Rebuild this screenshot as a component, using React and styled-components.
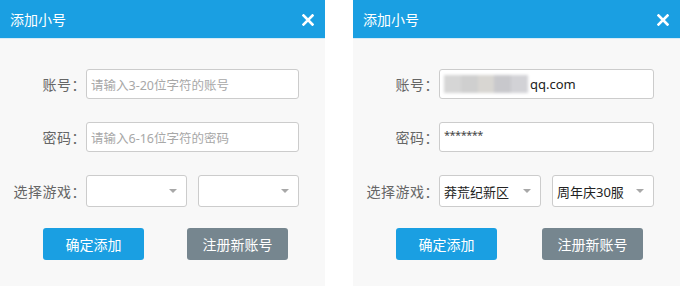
import React from 'react'
import styled, { createGlobalStyle } from 'styled-components'

const GlobalStyle = createGlobalStyle`
    body {
        margin: 0;
        background: #ffffff;
        font-family: "Noto Sans", "Noto Sans CJK SC", sans-serif;
    }
`

const dialogs = [
    { account: '', password: '', game: '', server: '' },
    { account: 'qq.com', password: '*******', game: '莽荒纪新区', server: '周年庆30服' }
]

const CloseIcon = () => (
    <svg width="12" height="12" viewBox="0 0 12 12">
        <path d="M1.5 1.5 L10.5 10.5 M10.5 1.5 L1.5 10.5" stroke="#ffffff" strokeWidth="2.6" strokeLinecap="square" />
    </svg>
)

const Dialog = ({ data, wide }) => (
    <Panel $wide={wide}>
        <Header>
            <Title>添加小号</Title>
            <Close><CloseIcon /></Close>
        </Header>
        <Body>
            <Row>
                <Label>账号：</Label>
                <Field>
                    {data.account ? (
                        <>
                            <Blur />
                            <Value>{data.account}</Value>
                        </>
                    ) : (
                        <Placeholder>请输入3-20位字符的账号</Placeholder>
                    )}
                </Field>
            </Row>
            <Row>
                <Label>密码：</Label>
                <Field>
                    {data.password ? (
                        <Stars>{data.password}</Stars>
                    ) : (
                        <Placeholder>请输入6-16位字符的密码</Placeholder>
                    )}
                </Field>
            </Row>
            <Row>
                <Label>选择游戏：</Label>
                <Selects>
                    <Select>
                        <Value>{data.game}</Value>
                        <Arrow />
                    </Select>
                    <Select>
                        <Value>{data.server}</Value>
                        <Arrow />
                    </Select>
                </Selects>
            </Row>
            <Buttons $wide={wide}>
                <Button $color="#1a9fe2">确定添加</Button>
                <Button $color="#76868f">注册新账号</Button>
            </Buttons>
        </Body>
    </Panel>
)

const App = () => (
    <>
        <GlobalStyle />
        <Page>
            <Dialog data={dialogs[0]} />
            <Dialog data={dialogs[1]} wide />
        </Page>
    </>
)

const Page = styled.div`
    display: flex;
    gap: 28px;
    width: 680px;
`

const Panel = styled.div`
    width: ${p => (p.$wide ? 327 : 325)}px;
    background: #f8f8f8;
    padding-bottom: 26px;
`

const Header = styled.div`
    height: 38px;
    background: #1a9fe2;
    display: flex;
    align-items: center;
    justify-content: space-between;
    padding: 0 11px 0 10px;
    color: #ffffff;
    border-bottom: 1px solid #d6ebf7;
`

const Title = styled.div`
    font-size: 14px;
`

const Close = styled.div`
    display: flex;
    align-items: center;
    margin-top: 1px;
`

const Body = styled.div`
    padding-top: 30px;
    display: flex;
    flex-direction: column;
    gap: 23px;
`

const Row = styled.div`
    display: grid;
    grid-template-columns: 86px 1fr;
    align-items: center;
    padding-right: 26px;
`

const Label = styled.div`
    text-align: right;
    font-size: 14px;
    color: #666666;
    letter-spacing: 0.5px;
`

const Field = styled.div`
    height: 28px;
    border: 1px solid #cccccc;
    border-radius: 3px;
    background: #ffffff;
    display: flex;
    align-items: center;
    padding: 0 4px;
    overflow: hidden;
`

const Placeholder = styled.span`
    font-size: 12.5px;
    color: #a8a8a8;
`

const Value = styled.span`
    font-size: 13px;
    color: #222222;
    white-space: nowrap;
`

const Stars = styled.span`
    font-size: 11px;
    color: #444444;
    align-self: flex-start;
    margin-top: 4px;
    letter-spacing: -0.5px;
`

const Blur = styled.span`
    width: 84px;
    height: 18px;
    margin-right: 2px;
    background: linear-gradient(90deg, #d6d6d6 0 20%, #cfcfcf 20% 40%, #d8d6d2 40% 60%, #c8c8cc 60% 80%, #d2d2d6 80% 100%);
    filter: blur(1.5px);
`

const Selects = styled.div`
    display: grid;
    grid-template-columns: 1fr 1fr;
    gap: 11px;
`

const Select = styled.div`
    height: 30px;
    border: 1px solid #cccccc;
    border-radius: 3px;
    background: #ffffff;
    display: flex;
    align-items: center;
    justify-content: space-between;
    padding: 0 9px 0 4px;
`

const Arrow = styled.span`
    width: 0;
    height: 0;
    border-left: 4px solid transparent;
    border-right: 4px solid transparent;
    border-top: 4px solid #a8a8a8;
`

const Buttons = styled.div`
    display: flex;
    gap: ${p => (p.$wide ? 45 : 43)}px;
    padding-left: 43px;
    margin-top: -2px;
`

const Button = styled.div`
    width: 101px;
    height: 32px;
    border-radius: 3px;
    background: ${p => p.$color};
    color: #ffffff;
    font-size: 14px;
    display: flex;
    align-items: center;
    justify-content: center;
`

export default App
